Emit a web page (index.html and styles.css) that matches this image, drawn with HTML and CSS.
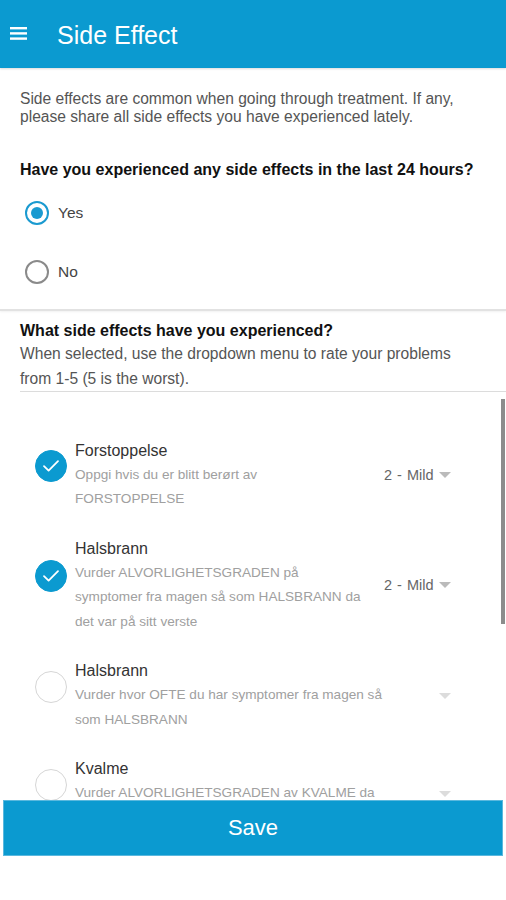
FILE: index.html
```html
<!DOCTYPE html>
<html>
<head>
<meta charset="utf-8">
<link rel="stylesheet" href="styles.css">
</head>
<body>
<div class="app">
  <header class="topbar">
    <svg class="menu" width="17" height="13" viewBox="0 0 17 13"><rect x="0" y="0" width="17" height="2.4" fill="#fff"/><rect x="0" y="5.2" width="17" height="2.4" fill="#fff"/><rect x="0" y="10.4" width="17" height="2.4" fill="#fff"/></svg>
    <h1 class="title">Side Effect</h1>
  </header>

  <section class="first">
    <p class="intro">Side effects are common when going through treatment. If any, please share all side effects you have experienced lately.</p>
    <p class="question">Have you experienced any side effects in the last 24 hours?</p>
    <div class="radio-row"><span class="radio checked"></span><span class="radio-label">Yes</span></div>
    <div class="radio-row"><span class="radio"></span><span class="radio-label">No</span></div>
  </section>

  <section class="second">
    <div class="second-inner">
      <p class="heading">What side effects have you experienced?</p>
      <p class="sub">When selected, use the dropdown menu to rate your problems from 1-5 (5 is the worst).</p>
    </div>
  </section>

  <div class="list">
    <div class="scrollbar"></div>
    <div class="item">
      <span class="check on"><svg width="18" height="14" viewBox="0 0 18 14"><path d="M2 7.2 L6.6 11.6 L16 2.2" fill="none" stroke="#fff" stroke-width="1.8" stroke-linecap="round" stroke-linejoin="round"/></svg></span>
      <div class="text">
        <div class="item-title">Forstoppelse</div>
        <div class="item-desc">Oppgi hvis du er blitt berørt av<br>FORSTOPPELSE</div>
      </div>
      <div class="select"><span class="val">2 - Mild</span><span class="caret"></span></div>
    </div>
    <div class="item">
      <span class="check on"><svg width="18" height="14" viewBox="0 0 18 14"><path d="M2 7.2 L6.6 11.6 L16 2.2" fill="none" stroke="#fff" stroke-width="1.8" stroke-linecap="round" stroke-linejoin="round"/></svg></span>
      <div class="text">
        <div class="item-title">Halsbrann</div>
        <div class="item-desc">Vurder ALVORLIGHETSGRADEN på<br>symptomer fra magen så som HALSBRANN da<br>det var på sitt verste</div>
      </div>
      <div class="select"><span class="val">2 - Mild</span><span class="caret"></span></div>
    </div>
    <div class="item">
      <span class="check"></span>
      <div class="text">
        <div class="item-title">Halsbrann</div>
        <div class="item-desc">Vurder hvor OFTE du har symptomer fra magen så som HALSBRANN</div>
      </div>
      <div class="select"><span class="val"></span><span class="caret light"></span></div>
    </div>
    <div class="item">
      <span class="check"></span>
      <div class="text">
        <div class="item-title">Kvalme</div>
        <div class="item-desc">Vurder ALVORLIGHETSGRADEN av KVALME da det var på sitt verste</div>
      </div>
      <div class="select"><span class="val"></span><span class="caret light"></span></div>
    </div>
  </div>

  <footer class="footer">
    <button class="save">Save</button>
  </footer>
</div>
</body>
</html>
```

FILE: styles.css
```css
* { box-sizing: border-box; }
html, body { margin: 0; padding: 0; background: #fff; }
body { font-family: "Liberation Sans", Arial, sans-serif; width: 506px; height: 900px; overflow: hidden; }
p { margin: 0; }

.app { display: flex; flex-direction: column; height: 900px; }

.topbar {
  height: 68px;
  flex: none;
  background: #0b9ad0;
  display: flex;
  align-items: center;
  padding-left: 10px;
  box-shadow: 0 1px 2px rgba(0,0,0,0.15);
}
.menu { display: block; margin-top: -1px; }
.title {
  margin: 2px 0 0 30px;
  color: #fff;
  font-weight: normal;
  font-size: 25px;
  line-height: 30px;
}

.first { padding: 22px 20px 0 20px; height: 243px; flex: none; border-bottom: 2px solid #e2e2e2; box-shadow: 0 1px 2px rgba(0,0,0,0.06); }
.intro { font-size: 15.6px; line-height: 18px; color: #555; }
.question { margin-top: 35px; font-size: 16px; line-height: 18px; font-weight: bold; color: #111; }

.radio-row { display: flex; align-items: center; height: 59px; padding-left: 5px; }
.first .question + .radio-row { margin-top: 4px; }
.radio {
  width: 24px; height: 24px; border-radius: 50%;
  border: 2px solid #8a8a8a;
  display: flex; align-items: center; justify-content: center;
}
.radio.checked { border-color: #1a9ad0; }
.radio.checked::after { content: ""; width: 12px; height: 12px; border-radius: 50%; background: #1a9ad0; }
.radio-label { margin-left: 9px; font-size: 15.5px; color: #444; }

.second { padding-left: 20px; flex: none; }
.second-inner { padding-top: 10px; border-bottom: 1px solid #dcdcdc; height: 81px; }
.heading { font-size: 16px; line-height: 20px; font-weight: bold; color: #111; }
.sub { margin-top: 1px; padding-right: 36px; font-size: 15.6px; line-height: 24.5px; color: #555; }

.list { position: relative; flex: 1; overflow: hidden; padding-top: 34px; }
.scrollbar { position: absolute; right: 1px; top: 7px; width: 4px; height: 225px; background: #8c8c8c; }

.item { display: flex; align-items: center; padding: 12.5px 0 12.5px 35px; }
.check {
  flex: none;
  width: 32px; height: 32px; border-radius: 50%;
  border: 1.5px solid #d6d6d6;
  margin-bottom: 18px;
  display: flex; align-items: center; justify-content: center;
}
.check.on { background: #0b9ad0; border-color: #0b9ad0; }
.check svg { display: block; }
.text { width: 309px; margin-left: 8px; flex: none; }
.item-title { font-size: 16px; line-height: 24px; color: #333; }
.item-desc { font-size: 13.6px; line-height: 24.5px; color: #a0a0a0; }
.select { display: flex; align-items: center; width: 72px; }
.val { font-size: 14.5px; color: #666; width: 55px; white-space: nowrap; word-spacing: 1px; }
.caret { width: 0; height: 0; border-left: 6px solid transparent; border-right: 6px solid transparent; border-top: 6px solid #bbb; margin-left: 0; }
.caret.light { border-top-color: #dcdcdc; }

.footer { flex: none; height: 100px; background: #fff; padding: 0 3px; }
.save {
  display: block; width: 100%; height: 56px;
  border: 1px solid #5ab8de;
  background: #0b9ad0; color: #fff;
  font-family: "Liberation Sans", Arial, sans-serif;
  font-size: 22px;
}
```
